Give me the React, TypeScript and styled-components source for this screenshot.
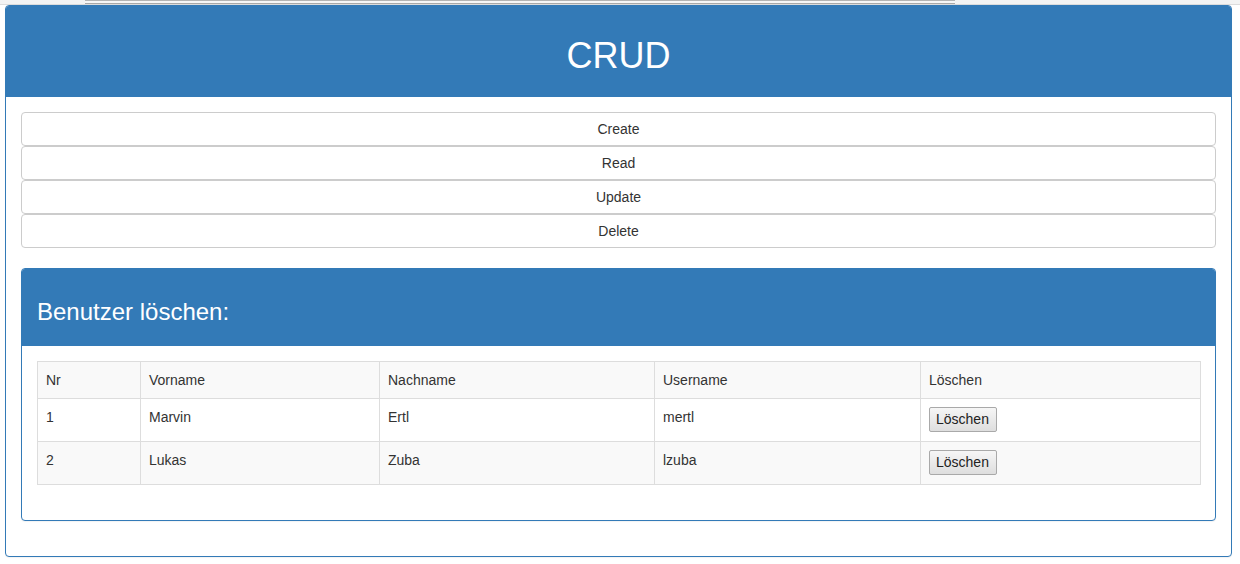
import React from "react";
import styled, { createGlobalStyle } from "styled-components";

const GlobalStyle = createGlobalStyle`
  * { box-sizing: border-box; }
  html, body { margin: 0; padding: 0; background: #fff; }
  body {
    font-family: "Liberation Sans", Arial, sans-serif;
    font-size: 14px;
    line-height: 1.42857143;
    color: #333;
  }
`;

const Page = styled.div`
  width: 1240px;
  height: 564px;
  overflow: hidden;
  position: relative;
`;

const TopStrip = styled.div`
  height: 5px;
  background: #f3f3f3;
  border-bottom: 1px solid #dcdcdc;
  padding-left: 85px;
`;

const StripThumb = styled.div`
  width: 870px;
  height: 4px;
  background: #f7f7f7;
  border-top: 1px solid #b4b4b4;
  border-bottom: 1px solid #a8a8a8;
`;

const Wrapper = styled.div`
  padding: 0 8px 0 5px;
`;

const Panel = styled.div<{ $mb?: number }>`
  background: #fff;
  border: 1px solid #337ab7;
  border-radius: 4px;
  box-shadow: 0 1px 1px rgba(0, 0, 0, 0.05);
  margin-bottom: ${(p) => p.$mb ?? 0}px;
`;

const PanelHeading = styled.div<{ $center?: boolean }>`
  background: #337ab7;
  color: #fff;
  padding: 10px 15px;
  border-bottom: 1px solid #337ab7;
  border-top-left-radius: 3px;
  border-top-right-radius: 3px;
  text-align: ${(p) => (p.$center ? "center" : "left")};
`;

const Title = styled.h1`
  margin: 20px 0 10px;
  font-size: 36px;
  font-weight: 500;
  line-height: 1.1;
`;

const SubTitle = styled.h3`
  margin: 20px 0 10px;
  font-size: 24px;
  font-weight: 500;
  line-height: 1.1;
`;

const PanelBody = styled.div`
  padding: 15px;
`;

const ButtonStack = styled.div`
  display: flex;
  flex-direction: column;
  margin-bottom: 20px;
`;

const BlockButton = styled.button`
  display: block;
  width: 100%;
  height: 34px;
  padding: 6px 12px;
  font-family: inherit;
  font-size: 14px;
  line-height: 20px;
  color: #333;
  background: #fff;
  border: 1px solid #ccc;
  border-radius: 4px;
  text-align: center;
  cursor: pointer;
`;

const Table = styled.table`
  width: 100%;
  border-collapse: collapse;
  table-layout: fixed;
  margin-bottom: 20px;
  border: 1px solid #ddd;
`;

const Row = styled.tr<{ $striped?: boolean }>`
  background: ${(p) => (p.$striped ? "#f9f9f9" : "#fff")};
`;

const Cell = styled.td`
  padding: 8px;
  border: 1px solid #ddd;
  vertical-align: top;
  text-align: left;
  font-weight: 400;
  line-height: 20px;
`;

const DeleteButton = styled.button`
  display: block;
  font-family: "Liberation Sans", Arial, sans-serif;
  font-size: 14px;
  line-height: 19px;
  height: 25px;
  padding: 2px 7px 2px 6px;
  margin: 0 0 1px;
  color: #222;
  background: linear-gradient(#f6f6f6, #dedede);
  border: 1px solid #a9a9a9;
  border-radius: 2px;
`;

const columns = [
  { label: "Nr", width: 103 },
  { label: "Vorname", width: 239 },
  { label: "Nachname", width: 275 },
  { label: "Username", width: 266 },
  { label: "Löschen", width: 280 },
];

const users = [
  { nr: 1, vorname: "Marvin", nachname: "Ertl", username: "mertl" },
  { nr: 2, vorname: "Lukas", nachname: "Zuba", username: "lzuba" },
];

export default function App() {
  return (
    <Page>
      <GlobalStyle />
      <TopStrip>
        <StripThumb />
      </TopStrip>
      <Wrapper>
        <Panel>
          <PanelHeading $center>
            <Title>CRUD</Title>
          </PanelHeading>
          <PanelBody>
            <ButtonStack>
              <BlockButton>Create</BlockButton>
              <BlockButton>Read</BlockButton>
              <BlockButton>Update</BlockButton>
              <BlockButton>Delete</BlockButton>
            </ButtonStack>
            <Panel $mb={20}>
              <PanelHeading>
                <SubTitle>Benutzer löschen:</SubTitle>
              </PanelHeading>
              <PanelBody>
                <Table>
                  <colgroup>
                    {columns.map((c) => (
                      <col key={c.label} style={{ width: c.width }} />
                    ))}
                  </colgroup>
                  <tbody>
                    <Row $striped>
                      {columns.map((c) => (
                        <Cell as="th" key={c.label}>
                          {c.label}
                        </Cell>
                      ))}
                    </Row>
                    {users.map((u, i) => (
                      <Row key={u.nr} $striped={i % 2 === 1}>
                        <Cell>{u.nr}</Cell>
                        <Cell>{u.vorname}</Cell>
                        <Cell>{u.nachname}</Cell>
                        <Cell>{u.username}</Cell>
                        <Cell>
                          <DeleteButton>Löschen</DeleteButton>
                        </Cell>
                      </Row>
                    ))}
                  </tbody>
                </Table>
              </PanelBody>
            </Panel>
          </PanelBody>
        </Panel>
      </Wrapper>
    </Page>
  );
}
